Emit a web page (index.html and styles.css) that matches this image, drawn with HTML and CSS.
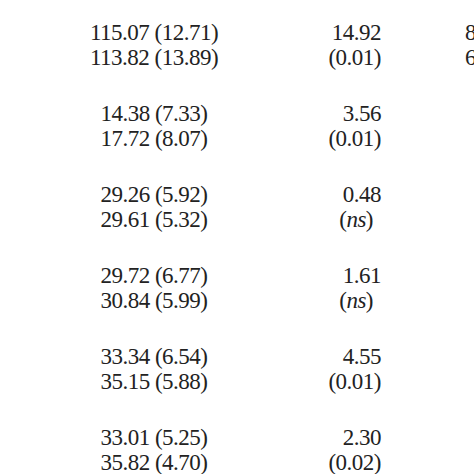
FILE: index.html
```html
<!DOCTYPE html>
<html>
<head>
<meta charset="utf-8">
<link rel="stylesheet" href="styles.css">
</head>
<body>
<div class="table">
  <div class="cell c1"><div>115.07 (12.71)</div><div>113.82 (13.89)</div></div>
  <div class="cell c2"><div>14.92</div><div>(0.01)</div></div>
  <div class="cell c3"><div>8.46</div><div>6.02</div></div>

  <div class="cell c1"><div>14.38 (7.33)</div><div>17.72 (8.07)</div></div>
  <div class="cell c2"><div>3.56</div><div>(0.01)</div></div>
  <div class="cell c3"></div>

  <div class="cell c1"><div>29.26 (5.92)</div><div>29.61 (5.32)</div></div>
  <div class="cell c2"><div>0.48</div><div class="ns">(<i>ns</i>)</div></div>
  <div class="cell c3"></div>

  <div class="cell c1"><div>29.72 (6.77)</div><div>30.84 (5.99)</div></div>
  <div class="cell c2"><div>1.61</div><div class="ns">(<i>ns</i>)</div></div>
  <div class="cell c3"></div>

  <div class="cell c1"><div>33.34 (6.54)</div><div>35.15 (5.88)</div></div>
  <div class="cell c2"><div>4.55</div><div>(0.01)</div></div>
  <div class="cell c3"></div>

  <div class="cell c1"><div>33.01 (5.25)</div><div>35.82 (4.70)</div></div>
  <div class="cell c2"><div>2.30</div><div>(0.02)</div></div>
  <div class="cell c3"></div>
</div>
</body>
</html>
```
FILE: styles.css
```css
html, body {
  margin: 0;
  padding: 0;
  background: #ffffff;
}
body {
  width: 474px;
  height: 474px;
  overflow: hidden;
  font-family: "Liberation Serif", "Times New Roman", serif;
  font-size: 23px;
  letter-spacing: -0.5px;
  line-height: 25px;
  color: #222222;
}
.table {
  display: grid;
  grid-template-columns: 200px 127px 200px;
  row-gap: 31px;
  padding: 20px 0 0 54px;
}
.cell {
  white-space: nowrap;
}
.c1 {
  text-align: center;
}
.c2 {
  text-align: right;
}
.c3 {
  text-align: left;
  padding-left: 84px;
}
.ns {
  padding-right: 8px;
}
```
